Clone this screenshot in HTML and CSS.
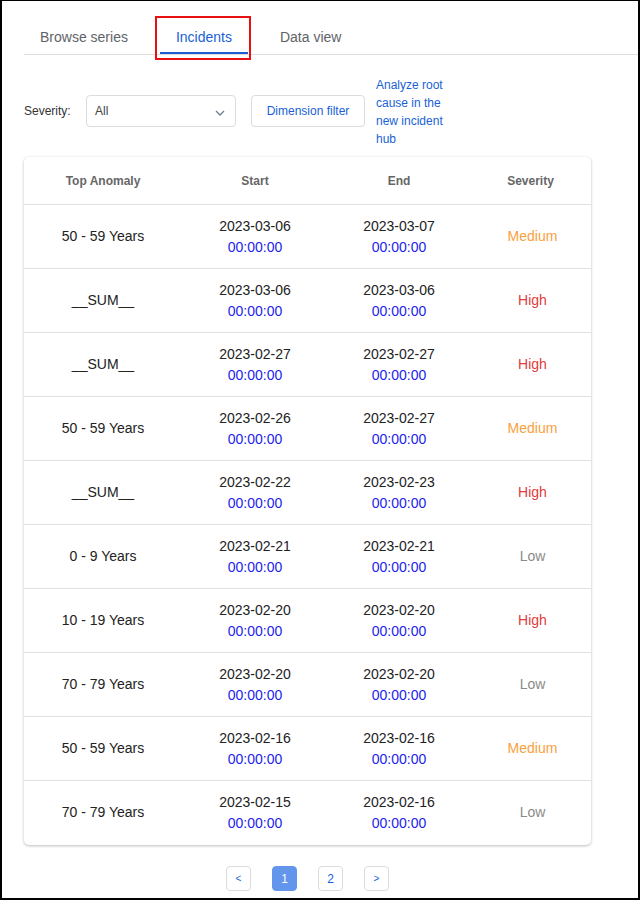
FILE: index.html
```html
<!DOCTYPE html>
<html>
<head>
<meta charset="utf-8">
<link rel="stylesheet" href="styles.css">
</head>
<body>
<div class="frame">
  <div class="tabs">
    <div class="tab">Browse series</div>
    <div class="tab active">Incidents</div>
    <div class="tab">Data view</div>
  </div>
  <div class="filters">
    <span class="label">Severity:</span>
    <div class="select">
      <span>All</span>
      <svg class="chev" width="10" height="6" viewBox="0 0 10 6"><path d="M1 1 L5 5 L9 1" fill="none" stroke="#6f7c96" stroke-width="1.3"/></svg>
    </div>
    <button class="btn">Dimension filter</button>
    <a class="link">Analyze root cause in the new incident hub</a>
  </div>
  <div class="card">
    <table>
      <colgroup>
        <col class="c1"><col class="c2"><col class="c3"><col class="c4">
      </colgroup>
      <thead>
        <tr><th>Top Anomaly</th><th>Start</th><th>End</th><th>Severity</th></tr>
      </thead>
      <tbody>
        <tr><td>50 - 59 Years</td><td><div>2023-03-06</div><div class="time">00:00:00</div></td><td><div>2023-03-07</div><div class="time">00:00:00</div></td><td class="medium">Medium</td></tr>
        <tr><td>__SUM__</td><td><div>2023-03-06</div><div class="time">00:00:00</div></td><td><div>2023-03-06</div><div class="time">00:00:00</div></td><td class="high">High</td></tr>
        <tr><td>__SUM__</td><td><div>2023-02-27</div><div class="time">00:00:00</div></td><td><div>2023-02-27</div><div class="time">00:00:00</div></td><td class="high">High</td></tr>
        <tr><td>50 - 59 Years</td><td><div>2023-02-26</div><div class="time">00:00:00</div></td><td><div>2023-02-27</div><div class="time">00:00:00</div></td><td class="medium">Medium</td></tr>
        <tr><td>__SUM__</td><td><div>2023-02-22</div><div class="time">00:00:00</div></td><td><div>2023-02-23</div><div class="time">00:00:00</div></td><td class="high">High</td></tr>
        <tr><td>0 - 9 Years</td><td><div>2023-02-21</div><div class="time">00:00:00</div></td><td><div>2023-02-21</div><div class="time">00:00:00</div></td><td class="low">Low</td></tr>
        <tr><td>10 - 19 Years</td><td><div>2023-02-20</div><div class="time">00:00:00</div></td><td><div>2023-02-20</div><div class="time">00:00:00</div></td><td class="high">High</td></tr>
        <tr><td>70 - 79 Years</td><td><div>2023-02-20</div><div class="time">00:00:00</div></td><td><div>2023-02-20</div><div class="time">00:00:00</div></td><td class="low">Low</td></tr>
        <tr><td>50 - 59 Years</td><td><div>2023-02-16</div><div class="time">00:00:00</div></td><td><div>2023-02-16</div><div class="time">00:00:00</div></td><td class="medium">Medium</td></tr>
        <tr><td>70 - 79 Years</td><td><div>2023-02-15</div><div class="time">00:00:00</div></td><td><div>2023-02-16</div><div class="time">00:00:00</div></td><td class="low">Low</td></tr>
      </tbody>
    </table>
  </div>
  <div class="pager">
    <button class="pg arrow">&lt;</button>
    <button class="pg current">1</button>
    <button class="pg">2</button>
    <button class="pg arrow">&gt;</button>
  </div>
</div>
</body>
</html>
```
FILE: styles.css
```css
*, *::before, *::after { box-sizing: border-box; }
html, body { margin: 0; padding: 0; background: #fff; }
body { font-family: "Liberation Sans", Arial, sans-serif; }
.frame {
  width: 640px;
  height: 900px;
  border-left: 2px solid #000;
  border-right: 2px solid #000;
  border-bottom: 2px solid #000;
  border-top: 1px solid #000;
  padding-left: 22px;
  overflow: hidden;
}
.tabs {
  display: flex;
  align-items: stretch;
  height: 38px;
  margin-top: 16px;
  border-bottom: 1px solid #dcdcdc;
  margin-right: -2px;
}
.tab {
  position: relative;
  padding: 11px 16px 0 16px;
  font-size: 14px;
  color: #5f6368;
  height: 37px;
  line-height: 18px;
}
.tab.active {
  color: #1a5fd6;
  margin: 0 16px 0 16px;
  border-bottom: 2px solid #1a5fd6;
}
.tab.active::after {
  content: "";
  position: absolute;
  left: -5px;
  top: -1px;
  width: 96px;
  height: 44px;
  border: 2px solid #e81010;
}
.filters {
  display: flex;
  align-items: flex-start;
  margin-top: 40px;
  height: 62px;
}
.label {
  font-size: 12px;
  color: #333;
  margin-top: 9px;
  width: 62px;
}
.select {
  width: 150px;
  height: 32px;
  border: 1px solid #dcdcdc;
  border-radius: 4px;
  display: flex;
  align-items: center;
  justify-content: space-between;
  padding: 0 8px;
  font-size: 12px;
  color: #444;
}
.chev { margin-right: 2px; margin-top: 3px; }
.btn {
  margin-left: 15px;
  width: 114px;
  height: 32px;
  border: 1px solid #dcdcdc;
  border-radius: 4px;
  background: #fff;
  color: #1a5fd6;
  font-family: "Liberation Sans", Arial, sans-serif;
  font-size: 12px;
  padding: 0;
}
.link {
  margin-left: 11px;
  margin-top: -19px;
  width: 74px;
  font-size: 12px;
  line-height: 18px;
  color: #1a5fd6;
}
.card {
  width: 567px;
  height: 688px;
  border-radius: 5px;
  box-shadow: 0 1px 3px rgba(0,0,0,0.25), 0 0 2px rgba(0,0,0,0.06);
  overflow: hidden;
}
table {
  width: 100%;
  border-collapse: collapse;
  table-layout: fixed;
}
col.c1 { width: 158px; }
col.c2 { width: 146px; }
col.c3 { width: 142px; }
col.c4 { width: 121px; }
th {
  height: 47px;
  font-size: 12px;
  font-weight: bold;
  color: #666;
  text-align: center;
  border-bottom: 1px solid #e0e0e0;
  padding: 1px 0 0 0;
}
td {
  height: 64px;
  text-align: center;
  font-size: 14px;
  color: #222;
  border-bottom: 1px solid #e0e0e0;
  padding: 0;
  line-height: 20px;
}
tbody tr:last-child td { border-bottom: none; }
td .time { color: #2222ee; margin-top: 1px; }
td.medium, td.high, td.low { padding-left: 4px; }
td.medium { color: #f8a040; }
td.high { color: #e03a3a; }
td.low { color: #8a8a8a; }
.pager {
  display: flex;
  gap: 21px;
  padding-left: 202px;
  margin-top: 21px;
}
.pg {
  width: 25px;
  height: 25px;
  border: 1px solid #dcdcdc;
  border-radius: 4px;
  background: #fff;
  color: #1a5fd6;
  font-family: "Liberation Sans", Arial, sans-serif;
  font-size: 12px;
  padding: 0;
}
.pg.arrow { font-size: 10px; }
.pg.current {
  background: #6495ed;
  border-color: #6495ed;
  color: #fff;
}
```
